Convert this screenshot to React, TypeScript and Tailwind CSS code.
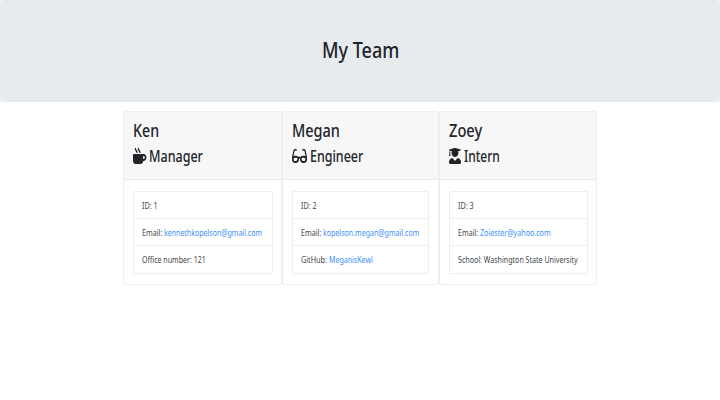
import { useLayoutEffect, useRef, useState } from "react";
import type { ReactNode } from "react";
import { FaGlasses, FaMugHot, FaUserGraduate } from "react-icons/fa";

// Condenses its text horizontally so that it fills the given width.
function Fit({ width, className = "", children }: { width: number; className?: string; children: ReactNode }) {
  const ref = useRef<HTMLSpanElement>(null);
  const [scale, setScale] = useState(1);
  useLayoutEffect(() => {
    if (ref.current) setScale(width / ref.current.offsetWidth);
  }, [width]);
  return (
    <span className={`block shrink-0 ${className}`} style={{ width }}>
      <span ref={ref} className="inline-block origin-left whitespace-nowrap" style={{ transform: `scaleX(${scale})` }}>
        {children}
      </span>
    </span>
  );
}

type Row = { label: string; labelWidth: number; link?: string; linkWidth?: number };
type Member = {
  name: string;
  nameWidth: number;
  role: string;
  roleWidth: number;
  icon: ReactNode;
  card: string;
  list: string;
  rows: Row[];
};

const team: Member[] = [
  {
    name: "Ken",
    nameWidth: 26,
    role: "Manager",
    roleWidth: 54,
    icon: <FaMugHot className="h-[16px] w-[13.5px]" preserveAspectRatio="none" />,
    card: "w-[159px]",
    list: "w-[140px]",
    rows: [
      { label: "ID: 1", labelWidth: 16 },
      { label: "Email:", labelWidth: 20, link: "kennethkopelson@gmail.com", linkWidth: 98 },
      { label: "Office number: 121", labelWidth: 64 },
    ],
  },
  {
    name: "Megan",
    nameWidth: 48,
    role: "Engineer",
    roleWidth: 53,
    icon: <FaGlasses className="h-[16px] w-[15px]" preserveAspectRatio="none" />,
    card: "w-[157px]",
    list: "w-[137px]",
    rows: [
      { label: "ID: 2", labelWidth: 16 },
      { label: "Email:", labelWidth: 20, link: "kopelson.megan@gmail.com", linkWidth: 96 },
      { label: "GitHub:", labelWidth: 26, link: "MeganisKewl", linkWidth: 43.5 },
    ],
  },
  {
    name: "Zoey",
    nameWidth: 33.5,
    role: "Intern",
    roleWidth: 36,
    icon: <FaUserGraduate className="h-[16px] w-[12px]" preserveAspectRatio="none" />,
    card: "w-[158px]",
    list: "w-[139px]",
    rows: [
      { label: "ID: 3", labelWidth: 16 },
      { label: "Email:", labelWidth: 20, link: "Zoiester@yahoo.com", linkWidth: 70.5 },
      { label: "School: Washington State University", labelWidth: 119.5 },
    ],
  },
];

function Card({ member }: { member: Member }) {
  return (
    <article className={`h-[174px] overflow-hidden rounded-[2px] border border-[#eeeeee] bg-white ${member.card}`}>
      <header className="h-[68px] border-b border-[#ebebeb] bg-[#f7f7f7] pt-[8px] pl-[9px]">
        <h2 className="text-[17.5px] leading-[20px] font-medium">
          <Fit width={member.nameWidth}>{member.name}</Fit>
        </h2>
        <h3 className="mt-[6px] flex items-center gap-[2.8px] text-[15.3px] leading-[20px] font-medium">
          {member.icon}
          <Fit width={member.roleWidth}>{member.role}</Fit>
        </h3>
      </header>
      <ul className={`mt-[11px] ml-[9px] rounded-[2px] border border-[#eeeeee] text-[8.6px] leading-[12px] text-[#42464a] ${member.list}`}>
        {member.rows.map((row) => (
          <li key={row.label} className="flex h-[27px] items-center gap-[1.7px] border-b border-[#eeeeee] pt-px pl-[8px] last:border-b-0">
            <Fit width={row.labelWidth}>{row.label}</Fit>
            {row.link && (
              <a className="text-[#3d90fc]">
                <Fit width={row.linkWidth ?? 0}>{row.link}</Fit>
              </a>
            )}
          </li>
        ))}
      </ul>
    </article>
  );
}

export default function App() {
  return (
    <div className="h-[400px] w-[720px] overflow-hidden bg-white font-['Noto_Sans','Open_Sans',sans-serif] text-[#212529]">
      <div className="flex h-[102px] items-center justify-center rounded-[3px] bg-[#e7ebee] pb-[5px]">
        <h1 className="text-[22px] leading-[28px] font-medium">
          <Fit width={77}>My Team</Fit>
        </h1>
      </div>
      <main className="mt-[9px] ml-[123px] flex">
        {team.map((member) => (
          <Card key={member.name} member={member} />
        ))}
      </main>
    </div>
  );
}
